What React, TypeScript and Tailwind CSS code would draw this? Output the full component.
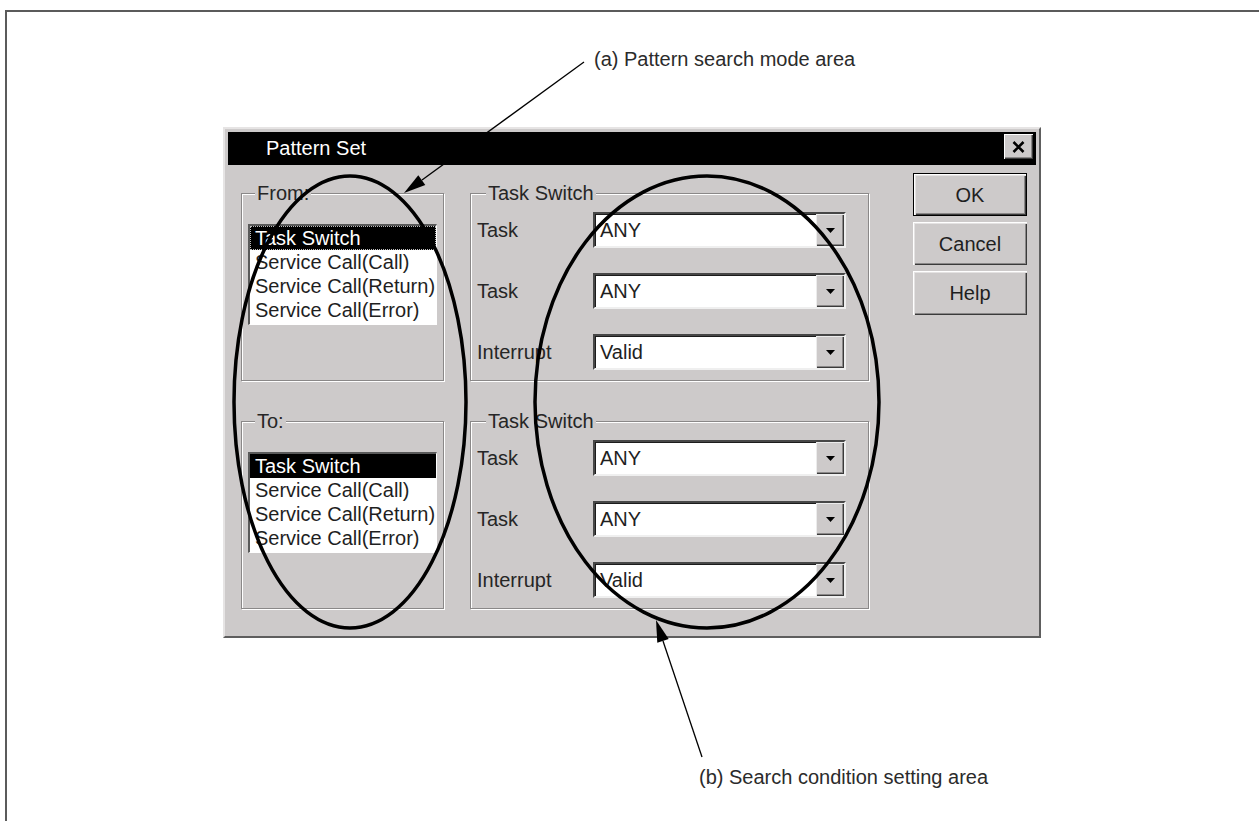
import React from 'react';

const items = ['Task Switch', 'Service Call(Call)', 'Service Call(Return)', 'Service Call(Error)'];

const ListBox: React.FC<{ focus?: boolean }> = ({ focus }) => (
  <div className="ml-[6px] mt-[30px] w-[189px] h-[101px] overflow-hidden bg-white border-t-2 border-l-2 border-b border-r border-t-[#5a5a5a] border-l-[#5a5a5a] border-b-white border-r-white">
    {items.map((t, i) => (
      <div
        key={t}
        className={
          i === 0
            ? focus
              ? 'h-[24px] leading-[22px] pl-[4px] whitespace-nowrap bg-black text-white border border-dotted border-[#bdbdbd]'
              : 'h-[24px] leading-[24px] pl-[5px] whitespace-nowrap bg-black text-white'
            : 'h-[24px] leading-[24px] pl-[5px] whitespace-nowrap text-[#1f1f1f]'
        }
      >
        {t}
      </div>
    ))}
  </div>
);

const Combo: React.FC<{ value: string }> = ({ value }) => (
  <div className="w-[253px] h-[36px] flex bg-white border-2 border-t-[#474747] border-l-[#474747] border-b-[#efefef] border-r-[#efefef] shadow-[inset_1px_1px_0_#1c1c1c]">
    <div className="flex-1 pl-[5px] leading-[32px] text-[#1f1f1f]">{value}</div>
    <div className="w-[28px] h-full bg-[#cdcaca] flex items-center justify-center shadow-[inset_1px_1px_0_#ececec,inset_-1px_-1px_0_#3a3a3a,inset_-2px_-2px_0_#8a8888]">
      <svg width="9" height="5" viewBox="0 0 9 5">
        <path d="M0 0H9L4.5 5Z" fill="#000" />
      </svg>
    </div>
  </div>
);

const Row: React.FC<{ label: string; value: string }> = ({ label, value }) => (
  <div className="flex items-center h-[36px]">
    <div className="w-[116px] text-[#262626]">{label}</div>
    <Combo value={value} />
  </div>
);

const ListGroup: React.FC<{ label: string; focus?: boolean }> = ({ label, focus }) => (
  <div className="relative w-[203px] h-[188px] border border-[#8a8888] shadow-[inset_1px_1px_0_#fff,1px_1px_0_#fff]">
    <span className="absolute left-[13px] -top-[12px] px-[2px] leading-[23px] bg-[#cdcaca] text-[#262626]">{label}</span>
    <ListBox focus={focus} />
  </div>
);

const TaskGroup: React.FC = () => (
  <div className="relative w-[399px] h-[188px] border border-[#8a8888] shadow-[inset_1px_1px_0_#fff,1px_1px_0_#fff] pl-[6px] pt-[18px] flex flex-col gap-[25px]">
    <span className="absolute left-[15px] -top-[12px] px-[2px] leading-[23px] bg-[#cdcaca] text-[#262626]">Task Switch</span>
    <Row label="Task" value="ANY" />
    <Row label="Task" value="ANY" />
    <Row label="Interrupt" value="Valid" />
  </div>
);

const btn =
  'w-[114px] flex items-center justify-center bg-[#cdcaca] text-[#1f1f1f] shadow-[inset_1px_1px_0_#fff,inset_2px_2px_0_#e4e2e2,inset_-1px_-1px_0_#3a3a3a,inset_-2px_-2px_0_#8a8888]';

export default function App() {
  return (
    <div className="relative w-[1259px] h-[821px] overflow-hidden bg-white text-[20px] font-['Liberation_Sans',Arial,sans-serif]">
      <div className="ml-[5px] mt-[10px] w-[1300px] h-[900px] border-l-2 border-t-2 border-[#5b5b5b] flex flex-col items-start">
        <div className="ml-[587px] mt-[36px] leading-[23px] text-[#2b2b2b]">(a) Pattern search mode area</div>

        {/* dialog */}
        <div className="ml-[216px] mt-[56px] w-[818px] h-[511px] bg-[#cdcaca] border-2 border-t-[#e6e4e4] border-l-[#e6e4e4] border-b-[#5e5e5e] border-r-[#5e5e5e] p-[3px] flex flex-col">
          <div className="h-[33px] bg-black flex items-start justify-between">
            <div className="pl-[38px] leading-[33px] text-white">Pattern Set</div>
            <div className="mt-[2px] mr-[3px] w-[29px] h-[25px] bg-[#cdcaca] flex items-center justify-center shadow-[inset_1px_1px_0_#fff,inset_-1px_-1px_0_#3a3a3a,inset_-2px_-2px_0_#8a8888]">
              <svg width="13" height="12" viewBox="0 0 13 12">
                <path d="M1.5 1L11.5 11M11.5 1L1.5 11" stroke="#000" strokeWidth="2.6" />
              </svg>
            </div>
          </div>

          <div className="flex pl-[13px]">
            <div className="pt-[28px] grid grid-cols-[203px_399px] gap-x-[26px] gap-y-[40px]">
              <ListGroup label="From:" focus />
              <TaskGroup />
              <ListGroup label="To:" />
              <TaskGroup />
            </div>
            <div className="ml-[44px] pt-[8px] flex flex-col gap-[6px]">
              <div className={btn + ' h-[43px] border border-black'}>OK</div>
              <div className={btn + ' h-[43px]'}>Cancel</div>
              <div className={btn + ' h-[44px]'}>Help</div>
            </div>
          </div>
        </div>

        <div className="ml-[692px] mt-[128px] leading-[23px] text-[#2b2b2b]">(b) Search condition setting area</div>
      </div>

      {/* annotation drawing */}
      <svg className="absolute left-0 top-0 pointer-events-none" width="1259" height="821" viewBox="0 0 1259 821">
        <ellipse cx="350" cy="402" rx="116" ry="226" fill="none" stroke="#000" strokeWidth="3.5" />
        <ellipse cx="707" cy="402" rx="172" ry="226" fill="none" stroke="#000" strokeWidth="3.5" />
        <line x1="584" y1="62" x2="422" y2="180" stroke="#000" strokeWidth="1.3" />
        <path d="M404 193L425.3 184.9L418.3 175.3Z" fill="#000" />
        <line x1="702" y1="757" x2="663" y2="641" stroke="#000" strokeWidth="1.3" />
        <path d="M656 620L668.7 639L657.3 642.8Z" fill="#000" />
      </svg>
    </div>
  );
}
